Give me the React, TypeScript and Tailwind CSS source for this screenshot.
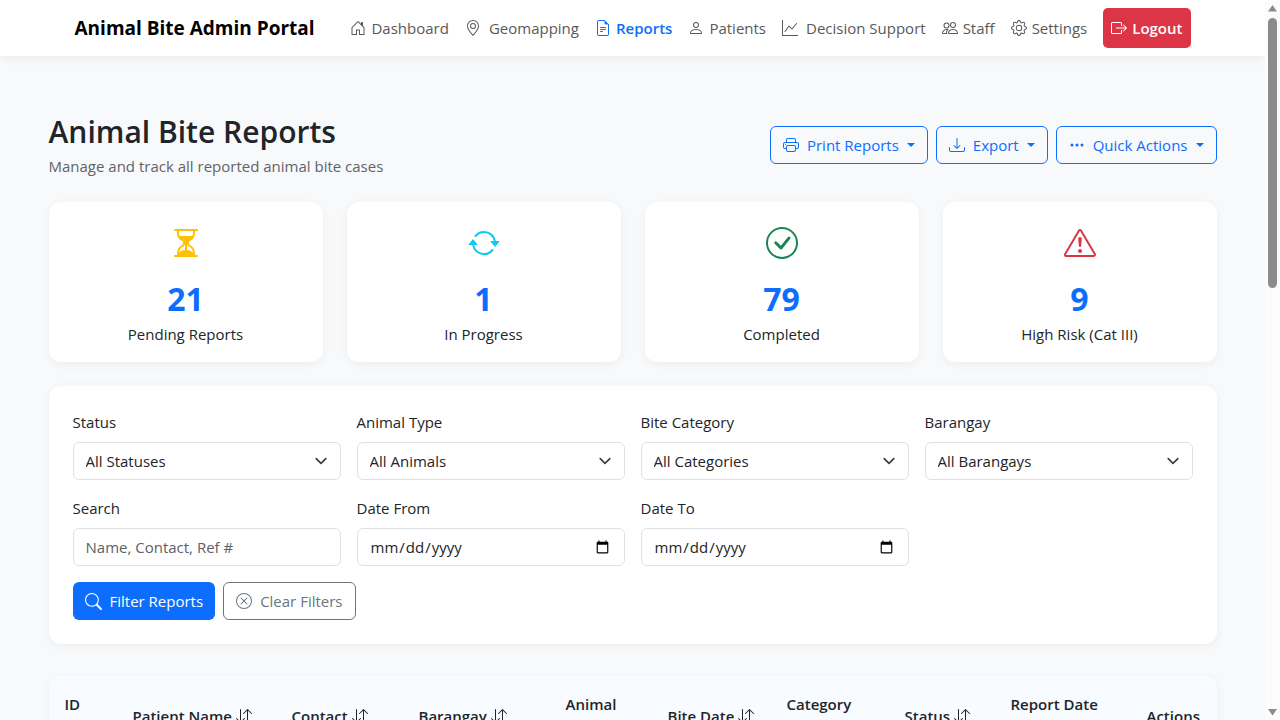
import type { ReactNode } from "react";
import type { IconType } from "react-icons";
import {
  BsArrowDownUp,
  BsArrowRepeat,
  BsBoxArrowRight,
  BsCheckCircle,
  BsDownload,
  BsExclamationTriangle,
  BsFileEarmarkText,
  BsGear,
  BsGeoAlt,
  BsGraphUp,
  BsHourglassSplit,
  BsHouseDoor,
  BsPeople,
  BsPerson,
  BsPrinter,
  BsSearch,
  BsThreeDots,
  BsXCircle,
} from "react-icons/bs";

type NavItem = { label: string; icon: IconType; spacing: string; active?: boolean };

const navItems: NavItem[] = [
  { label: "Dashboard", icon: BsHouseDoor, spacing: "gap-[5px]" },
  { label: "Geomapping", icon: BsGeoAlt, spacing: "gap-2" },
  { label: "Reports", icon: BsFileEarmarkText, spacing: "gap-[5px]", active: true },
  { label: "Patients", icon: BsPerson, spacing: "gap-[5px]" },
  { label: "Decision Support", icon: BsGraphUp, spacing: "gap-2" },
  { label: "Staff", icon: BsPeople, spacing: "gap-[5px]" },
  { label: "Settings", icon: BsGear, spacing: "gap-[5px]" },
];

const menus: { label: string; icon: IconType }[] = [
  { label: "Print Reports", icon: BsPrinter },
  { label: "Export", icon: BsDownload },
  { label: "Quick Actions", icon: BsThreeDots },
];

const stats: { value: number; label: string; icon: IconType; color: string }[] = [
  { value: 21, label: "Pending Reports", icon: BsHourglassSplit, color: "text-[#ffc107]" },
  { value: 1, label: "In Progress", icon: BsArrowRepeat, color: "text-[#0dcaf0]" },
  { value: 79, label: "Completed", icon: BsCheckCircle, color: "text-[#198754]" },
  { value: 9, label: "High Risk (Cat III)", icon: BsExclamationTriangle, color: "text-[#dc3545]" },
];

const columns: { label: string; width: string; sortable: boolean; stacked?: boolean }[] = [
  { label: "ID", width: "w-[68px]", sortable: true, stacked: true },
  { label: "Patient Name", width: "w-[159px]", sortable: true },
  { label: "Contact", width: "w-[127px]", sortable: true },
  { label: "Barangay", width: "w-[147px]", sortable: true },
  { label: "Animal", width: "w-[102px]", sortable: true, stacked: true },
  { label: "Bite Date", width: "w-[119px]", sortable: true },
  { label: "Category", width: "w-[118px]", sortable: true, stacked: true },
  { label: "Status", width: "w-[106px]", sortable: true },
  { label: "Report Date", width: "w-[136px]", sortable: true, stacked: true },
  { label: "Actions", width: "w-[86px]", sortable: false },
];

const control =
  "h-[38px] w-full rounded-md border border-[#dee2e6] bg-white px-3 text-[15px] text-[#212529] placeholder:text-[#5b6167]";

function Field({ id, label, children }: { id: string; label: string; children: ReactNode }) {
  return (
    <div>
      <label htmlFor={id} className="mb-2 block leading-6">
        {label}
      </label>
      {children}
    </div>
  );
}

function SelectField({ id, label, option }: { id: string; label: string; option: string }) {
  return (
    <Field id={id} label={label}>
      <div className="relative">
        <select id={id} className={`${control} appearance-none`}>
          <option>{option}</option>
        </select>
        <svg
          viewBox="0 0 16 16"
          className="pointer-events-none absolute top-[11px] right-3 h-4 w-4"
          fill="none"
          stroke="#343a40"
          strokeWidth="2"
          strokeLinecap="round"
          strokeLinejoin="round"
        >
          <path d="m2 5 6 6 6-6" transform="translate(1.6 1.6) scale(.8)" />
        </svg>
      </div>
    </Field>
  );
}

function Navbar() {
  return (
    <nav className="relative bg-white shadow-[0_2px_10px_rgba(0,0,0,0.06)]">
      <div className="mx-auto flex h-14 max-w-[1140px] items-center justify-between px-3">
        <a href="#" className="text-[19px] font-bold whitespace-nowrap text-black">
          Animal Bite Admin Portal
        </a>
        <div className="flex items-center gap-4">
          {navItems.map(({ label, icon: Icon, spacing, active }) => (
            <a
              key={label}
              href="#"
              className={`flex items-center whitespace-nowrap ${spacing} ${
                active ? "font-semibold text-[#0d6efd]" : "text-[#595959]"
              }`}
            >
              <Icon className="h-4 w-4" />
              {label}
            </a>
          ))}
          <a
            href="#"
            className="flex h-10 items-center gap-[5px] rounded-[5px] bg-[#dc3545] px-2 font-semibold text-white"
          >
            <BsBoxArrowRight className="h-4 w-4" />
            Logout
          </a>
        </div>
      </div>
    </nav>
  );
}

function Scrollbar() {
  return (
    <div aria-hidden="true" className="flex w-[15px] shrink-0 flex-col items-center bg-[#fcfcfc]">
      <svg viewBox="0 0 15 18" className="h-[18px] w-[15px]" fill="#8b8b8b">
        <path d="M7.5 5 12 11.5H3z" />
      </svg>
      <div className="h-[270px] w-[9px] rounded-full bg-[#8b8b8b]" />
      <svg viewBox="0 0 15 18" className="mt-auto h-[18px] w-[15px]" fill="#8b8b8b">
        <path d="M3 7h9l-4.500 6.500z" />
      </svg>
    </div>
  );
}

export default function App() {
  return (
    <div className="flex h-screen overflow-hidden bg-[#f8f9fb] font-['Open_Sans','Noto_Sans',sans-serif] text-[15px] leading-6 text-[#212529]">
      <div className="min-w-0 flex-1 overflow-hidden">
        <Navbar />
        <main className="mx-auto max-w-[1168px] pt-14">
          <header className="mb-6 flex items-center justify-between">
            <div>
              <h1 className="mb-[2px] text-[30px] leading-10 font-semibold">Animal Bite Reports</h1>
              <p className="text-[#5f6468]">Manage and track all reported animal bite cases</p>
            </div>
            <div className="flex gap-2">
              {menus.map(({ label, icon: Icon }) => (
                <button
                  key={label}
                  type="button"
                  className="flex h-[38px] items-center gap-2 rounded-md border border-[#0d6efd] px-3 whitespace-nowrap text-[#0d6efd]"
                >
                  <Icon className="h-4 w-4" />
                  {label}
                  <span className="border-x-4 border-t-4 border-x-transparent border-t-[#0d6efd]" />
                </button>
              ))}
            </div>
          </header>

          <section className="mb-6 grid grid-cols-4 gap-6">
            {stats.map(({ value, label, icon: Icon, color }) => (
              <div
                key={label}
                className="flex h-40 flex-col items-center rounded-xl bg-white pt-[25px] shadow-[0_2px_10px_rgba(0,0,0,0.05)]"
              >
                <Icon className={`mb-[17px] h-8 w-8 ${color}`} />
                <div className="text-[32px] leading-[46px] font-bold text-[#0d6efd]">{value}</div>
                <div>{label}</div>
              </div>
            ))}
          </section>

          <form className="mb-8 rounded-xl bg-white p-6 shadow-[0_2px_10px_rgba(0,0,0,0.05)]">
            <div className="grid grid-cols-4 gap-4">
              <SelectField id="status" label="Status" option="All Statuses" />
              <SelectField id="animal" label="Animal Type" option="All Animals" />
              <SelectField id="category" label="Bite Category" option="All Categories" />
              <SelectField id="barangay" label="Barangay" option="All Barangays" />
              <Field id="search" label="Search">
                <input id="search" type="text" placeholder="Name, Contact, Ref #" className={control} />
              </Field>
              <Field id="from" label="Date From">
                <input id="from" type="date" className={control} />
              </Field>
              <Field id="to" label="Date To">
                <input id="to" type="date" className={control} />
              </Field>
            </div>
            <div className="mt-4 flex gap-2">
              <button
                type="submit"
                className="flex h-[38px] items-center gap-2 rounded-md bg-[#0d6efd] px-3 text-white"
              >
                <BsSearch className="h-[17px] w-[17px]" />
                Filter Reports
              </button>
              <button
                type="reset"
                className="flex h-[38px] items-center gap-2 rounded-md border border-[#6c757d] px-3 text-[#6c757d]"
              >
                <BsXCircle className="h-4 w-4" />
                Clear Filters
              </button>
            </div>
          </form>

          <div className="overflow-hidden rounded-xl bg-[#f8fbff] shadow-[0_2px_10px_rgba(0,0,0,0.05)]">
            <table className="w-full table-fixed text-left">
              <thead>
                <tr>
                  {columns.map(({ label, width, sortable, stacked }) => (
                    <th key={label} className={`${width} py-4 pl-4 align-middle font-semibold whitespace-nowrap`}>
                      <span className={stacked ? "flex flex-col" : "flex items-center gap-1"}>
                        {label}
                        {sortable && (
                          <span className="flex h-6 items-center">
                            <BsArrowDownUp className="h-4 w-4" />
                          </span>
                        )}
                      </span>
                    </th>
                  ))}
                </tr>
              </thead>
            </table>
          </div>
        </main>
      </div>
      <Scrollbar />
    </div>
  );
}
